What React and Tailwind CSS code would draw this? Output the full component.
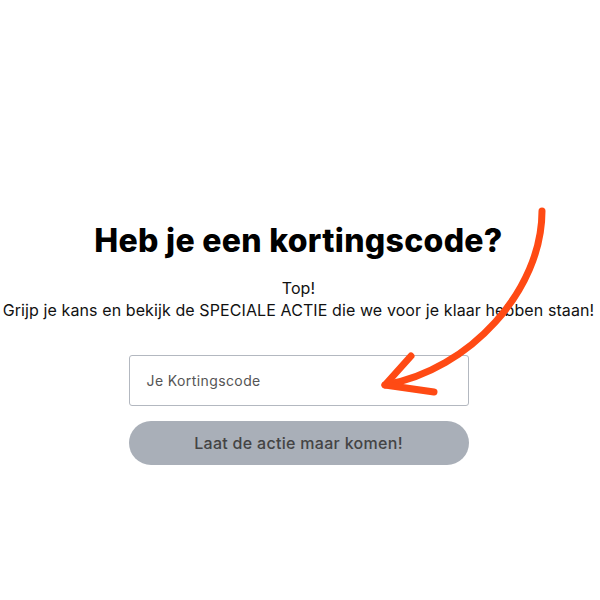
import React from "react";

export default function App() {
  return (
    <div className="relative w-[600px] h-[600px] bg-white overflow-hidden" style={{ fontFamily: "Inter, 'Noto Sans', sans-serif" }}>
      <div className="flex flex-col items-center pt-[221px] pr-[3px]">
        <h1 className="text-[32px] leading-[40px] font-extrabold text-black tracking-[0.3px]">Heb je een kortingscode?</h1>
        <div className="mt-[16px] text-center text-[16px] leading-[22px] text-[#111] tracking-[0.1px]">
          <div>Top!</div>
          <div className="whitespace-nowrap">Grijp je kans en bekijk de SPECIALE ACTIE die we voor je klaar hebben staan!</div>
        </div>
        <div className="mt-[34px] w-[340px] h-[51px] border border-[#b3b8c0] rounded-[3px] flex items-center px-[17px] text-[14px] text-[#555] tracking-[0.4px]">
          Je Kortingscode
        </div>
        <div className="mt-[15px] w-[340px] h-[44px] rounded-full bg-[#a9afb8] flex items-center justify-center text-[16px] font-medium text-[#444] tracking-[0.3px]">
          Laat de actie maar komen!
        </div>
      </div>
      <svg className="absolute left-0 top-0" width="600" height="600" viewBox="0 0 600 600" fill="none">
        <path d="M542 211 C 542 290 470 370 385 385" stroke="#ff4a14" strokeWidth="7" strokeLinecap="round" fill="none" />
        <path d="M411 356 L 385 385 L 434 392" stroke="#ff4a14" strokeWidth="7" strokeLinecap="round" strokeLinejoin="round" fill="none" />
      </svg>
    </div>
  );
}
